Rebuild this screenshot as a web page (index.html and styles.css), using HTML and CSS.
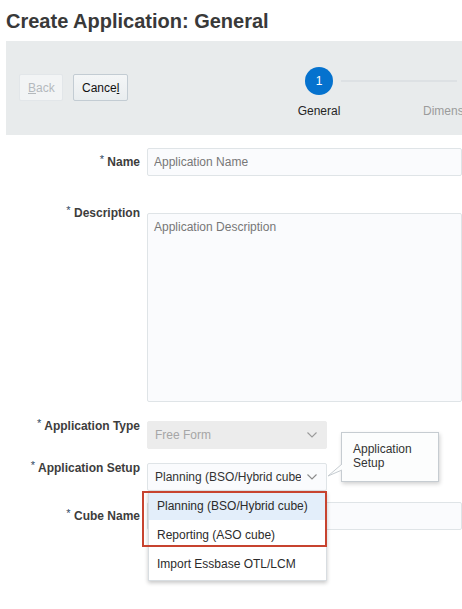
FILE: index.html
```html
<!DOCTYPE html>
<html lang="en">
<head>
    <meta charset="UTF-8">
    <title>Create Application: General</title>
    <link rel="stylesheet" href="styles.css">
</head>
<body>
    <h1 class="page-title">Create Application: General</h1>

    <div class="train-bar">
        <div class="train-buttons">
            <button class="btn btn-disabled" disabled><u>B</u>ack</button>
            <button class="btn">Cance<u>l</u></button>
        </div>
        <div class="train">
            <div class="step step-current">
                <span class="step-dot">1</span>
                <span class="step-label">General</span>
            </div>
            <div class="step">
                <span class="step-dot">2</span>
                <span class="step-label step-label-left">Dimensions</span>
            </div>
        </div>
    </div>

    <form class="app-form">
        <div class="form-row row-name">
            <label class="form-label"><sup>*</sup> Name</label>
            <input class="field" type="text" placeholder="Application Name">
        </div>

        <div class="form-row row-desc">
            <label class="form-label label-desc"><sup>*</sup> Description</label>
            <textarea class="field field-area" placeholder="Application Description"></textarea>
        </div>

        <div class="form-row row-type">
            <label class="form-label label-top"><sup>*</sup> Application Type</label>
            <div class="select select-disabled">
                <span class="select-text">Free Form</span>
                <svg class="chevron" width="10" height="6" viewBox="0 0 10 6"><path d="M0.5 0.5 L5 5 L9.5 0.5" fill="none" stroke="#9a9a9a" stroke-width="1.1"/></svg>
            </div>
        </div>

        <div class="form-row row-setup">
            <label class="form-label label-top"><sup>*</sup> Application Setup</label>
            <div class="select-wrap">
                <div class="select">
                    <span class="select-text">Planning (BSO/Hybrid cube)</span>
                    <svg class="chevron" width="10" height="6" viewBox="0 0 10 6"><path d="M0.5 0.5 L5 5 L9.5 0.5" fill="none" stroke="#8a8a8a" stroke-width="1.1"/></svg>
                </div>

                <ul class="dropdown">
                    <li class="dropdown-item active">Planning (BSO/Hybrid cube)</li>
                    <li class="dropdown-item">Reporting (ASO cube)</li>
                    <li class="dropdown-item">Import Essbase OTL/LCM</li>
                </ul>
                <div class="highlight-box"></div>

                <div class="tooltip">
                    Application<br>Setup
                    <svg class="tooltip-tail" width="18" height="14" viewBox="0 0 18 14">
                        <path d="M15 0 L1 12 L15 6" fill="#fcfdfd" stroke="#c6ccd1" stroke-width="1"/>
                    </svg>
                </div>
            </div>
        </div>

        <div class="form-row row-cube">
            <label class="form-label"><sup>*</sup> Cube Name</label>
            <input class="field" type="text">
        </div>
    </form>
</body>
</html>
```

FILE: styles.css
```css
html {
    overflow: hidden;
}

body {
    margin: 0;
    min-height: 609px;
    font-family: 'Liberation Sans', Arial, sans-serif;
    font-size: 12px;
    color: #333;
    background: #fff;
}

.page-title {
    margin: 0;
    padding: 9px 0 0 6px;
    height: 32px;
    box-sizing: border-box;
    font-size: 20px;
    font-weight: bold;
    line-height: 24px;
    color: #393939;
}

.train-bar {
    margin: 9px 0 0 6px;
    height: 94px;
    background: #e8ebec;
    display: flex;
}

.train-buttons {
    display: flex;
    gap: 10px;
    padding: 33px 0 0 13px;
}

.btn {
    height: 27px;
    padding: 0 8px;
    font-family: inherit;
    font-size: 12px;
    color: #111;
    background: linear-gradient(#f4f6f7, #e9edef);
    border: 1px solid #c3ccd3;
    border-radius: 2px;
}

.btn-disabled {
    width: 44px;
    color: #b4b9bd;
    background: #f2f4f5;
    border-color: #e2e6e9;
}

.btn:not(.btn-disabled) {
    width: 55px;
}

.train {
    display: flex;
    gap: 48px;
    margin-left: 135px;
    padding-top: 26px;
}

.step {
    width: 112px;
    flex: none;
    display: flex;
    flex-direction: column;
    align-items: center;
    position: relative;
}

.step-dot {
    width: 28px;
    height: 28px;
    border-radius: 50%;
    background: #c6ccd1;
    color: #fff;
    font-size: 12px;
    line-height: 28px;
    text-align: center;
}

.step-current .step-dot {
    background: #0572ce;
}

.step + .step::before {
    content: '';
    position: absolute;
    top: 13px;
    right: calc(50% + 22px);
    width: 116px;
    height: 2px;
    background: #dde1e4;
}

.step-label {
    margin-top: 9px;
    width: 100%;
    text-align: center;
    line-height: 14px;
    white-space: nowrap;
    color: #252525;
}

.step-label-left {
    text-align: left;
    color: #9b9b9b;
}

.app-form {
    padding-top: 13px;
}

.form-row {
    display: flex;
    align-items: flex-start;
    gap: 7px;
}

.row-name { margin-bottom: 37px; }
.row-desc { margin-bottom: 19px; }
.row-type { margin-bottom: 14px; }
.row-setup { margin-bottom: 11px; }

.form-label {
    width: 140px;
    flex: none;
    text-align: right;
    font-weight: bold;
    line-height: 28px;
    color: #3d3d3d;
}

.form-label sup {
    font-weight: normal;
    font-size: 11px;
    line-height: 0;
    vertical-align: 3px;
    color: #2f4a63;
}

.label-desc {
    line-height: 14px;
    margin-top: -7px;
}

.label-top {
    line-height: 14px;
    margin-top: -2px;
}

.field {
    width: 340px;
    height: 28px;
    box-sizing: border-box;
    padding: 0 6px;
    font-family: inherit;
    font-size: 12px;
    color: #333;
    background: #fafbfd;
    border: 1px solid #dfe4e7;
    border-radius: 2px;
    outline: none;
}

.field::placeholder {
    color: #777;
}

.field-area {
    height: 189px;
    padding-top: 6px;
    resize: none;
}

.select-wrap {
    position: relative;
}

.select {
    width: 180px;
    height: 28px;
    box-sizing: border-box;
    display: flex;
    align-items: center;
    padding: 0 9px 0 7px;
    background: #fafbfd;
    border: 1px solid #dfe4e7;
    border-radius: 2px;
}

.select-disabled {
    background: #ececec;
    border-color: #ececec;
    color: #a6a6a6;
}

.select-text {
    width: 146px;
    overflow: hidden;
    white-space: nowrap;
    font-size: 12px;
}

.chevron {
    margin-left: auto;
}

.dropdown {
    position: absolute;
    top: 28px;
    left: 1px;
    width: 179px;
    margin: 0;
    padding: 0 0 2px;
    list-style: none;
    background: #fff;
    border: 1px solid #d8dde1;
    box-sizing: border-box;
    box-shadow: 0 2px 4px rgba(0, 0, 0, 0.22);
    z-index: 2;
}

.dropdown-item {
    height: 28px;
    line-height: 28px;
    padding-left: 8px;
    color: #2b2b2b;
}

.dropdown-item + .dropdown-item {
    margin-top: 1px;
}

.dropdown-item.active {
    background: #e3eefa;
}

.highlight-box {
    position: absolute;
    top: 28px;
    left: -5px;
    width: 185px;
    height: 56px;
    box-sizing: border-box;
    border: 2px solid #c7432f;
    z-index: 3;
}

.tooltip {
    position: absolute;
    top: -31px;
    left: 194px;
    width: 98px;
    height: 50px;
    box-sizing: border-box;
    padding: 9px 0 0 11px;
    line-height: 14px;
    color: #333;
    background: #fcfdfd;
    border: 1px solid #c6ccd1;
    box-shadow: 1px 2px 4px rgba(0, 0, 0, 0.18);
    z-index: 2;
}

.tooltip-tail {
    position: absolute;
    left: -15px;
    top: 31px;
}
```
